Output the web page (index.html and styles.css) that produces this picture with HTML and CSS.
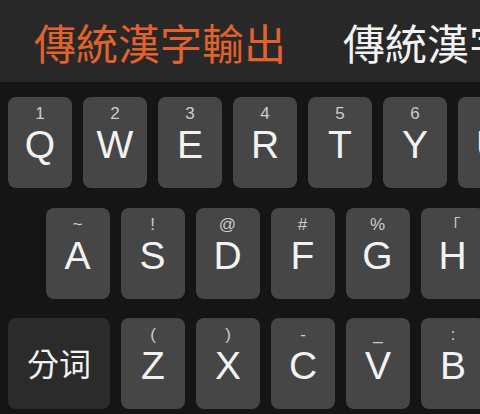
FILE: index.html
```html
<!DOCTYPE html>
<html lang="zh-Hant">
<head>
<meta charset="utf-8">
<link rel="stylesheet" href="styles.css">
</head>
<body>
<div class="screen">
  <div class="candidates">
    <span class="cand cand-active">傳統漢字輸出</span>
    <span class="cand">傳統漢字輸出</span>
  </div>
  <div class="keyboard">
    <div class="row row-1">
      <div class="key"><span class="sub">1</span><span class="main">Q</span></div>
      <div class="key"><span class="sub">2</span><span class="main">W</span></div>
      <div class="key"><span class="sub">3</span><span class="main">E</span></div>
      <div class="key"><span class="sub">4</span><span class="main">R</span></div>
      <div class="key"><span class="sub">5</span><span class="main">T</span></div>
      <div class="key"><span class="sub">6</span><span class="main">Y</span></div>
      <div class="key"><span class="sub">7</span><span class="main">U</span></div>
    </div>
    <div class="row row-2">
      <div class="key"><span class="sub">~</span><span class="main">A</span></div>
      <div class="key"><span class="sub">!</span><span class="main">S</span></div>
      <div class="key"><span class="sub">@</span><span class="main">D</span></div>
      <div class="key"><span class="sub">#</span><span class="main">F</span></div>
      <div class="key"><span class="sub">%</span><span class="main">G</span></div>
      <div class="key"><span class="sub cjk-sub">「</span><span class="main">H</span></div>
    </div>
    <div class="row row-3">
      <div class="key key-func"><span class="func-label">分词</span></div>
      <div class="key"><span class="sub">(</span><span class="main">Z</span></div>
      <div class="key"><span class="sub">)</span><span class="main">X</span></div>
      <div class="key"><span class="sub">-</span><span class="main">C</span></div>
      <div class="key"><span class="sub">_</span><span class="main">V</span></div>
      <div class="key"><span class="sub">:</span><span class="main">B</span></div>
    </div>
  </div>
</div>
</body>
</html>
```
FILE: styles.css
```css
html, body {
  margin: 0;
  padding: 0;
  background: #151515;
  overflow: hidden;
}
.screen {
  width: 480px;
  height: 414px;
  overflow: hidden;
  background: #151515;
}
.candidates {
  height: 82px;
  background: #282828;
  display: flex;
  align-items: center;
  gap: 57px;
  padding-left: 34px;
  white-space: nowrap;
  overflow: hidden;
}
.cand {
  font-family: "Noto Sans CJK TC", "Noto Sans CJK SC", sans-serif;
  font-size: 42px;
  line-height: 42px;
  color: #f2f2f2;
  flex: none;
  margin-top: 2px;
}
.cand-active {
  color: #e2612d;
}
.keyboard {
  padding-top: 15px;
  display: flex;
  flex-direction: column;
  gap: 19.5px;
}
.row {
  display: flex;
  gap: 11px;
  white-space: nowrap;
}
.row-1 { padding-left: 8px; }
.row-2 { padding-left: 45.5px; }
.row-3 { padding-left: 8px; }
.key {
  flex: none;
  width: 64px;
  height: 91px;
  border-radius: 8px;
  background: #464646;
  display: flex;
  flex-direction: column;
  align-items: center;
  padding-top: 8px;
  box-sizing: border-box;
  font-family: "Liberation Sans", Arial, sans-serif;
}
.sub {
  font-size: 17px;
  line-height: 17px;
  height: 17px;
  color: #cccccc;
}
.cjk-sub {
  font-family: "Noto Sans CJK TC", sans-serif;
  font-size: 16px;
}
.main {
  margin-top: 3px;
  font-size: 39px;
  line-height: 39px;
  color: #f2f2f2;
}
.key-func {
  width: 102px;
  background: #2b2b2b;
  padding-top: 0;
  padding-bottom: 4px;
  justify-content: center;
}
.func-label {
  font-family: "Noto Sans CJK SC", sans-serif;
  font-size: 32px;
  line-height: 32px;
  color: #f2f2f2;
}
```
